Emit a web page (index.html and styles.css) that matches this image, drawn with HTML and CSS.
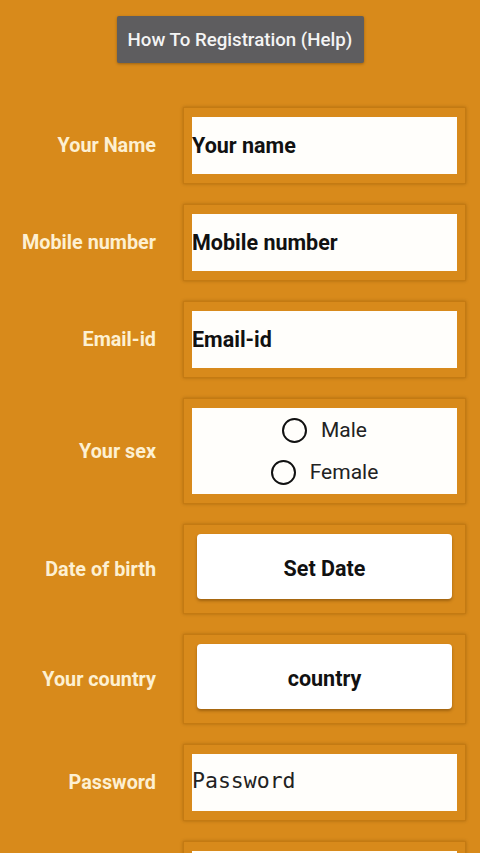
FILE: index.html
```html
<!DOCTYPE html>
<html lang="en">
<head>
    <meta charset="UTF-8">
    <meta name="viewport" content="width=device-width, initial-scale=1.0">
    <title>Registration</title>
    <link rel="stylesheet" href="styles.css">
</head>
<body>
    <div class="top">
        <button class="help">How To Registration (Help)</button>
    </div>

    <div class="form">
        <div class="row">
            <label class="label">Your Name</label>
            <div class="frame">
                <input class="field" type="text" placeholder="Your name">
            </div>
        </div>

        <div class="row">
            <label class="label">Mobile number</label>
            <div class="frame">
                <input class="field" type="text" placeholder="Mobile number">
            </div>
        </div>

        <div class="row">
            <label class="label">Email-id</label>
            <div class="frame">
                <input class="field" type="text" placeholder="Email-id">
            </div>
        </div>

        <div class="row">
            <label class="label">Your sex</label>
            <div class="frame">
                <div class="radios">
                    <div class="radio"><span class="dot"></span>Male</div>
                    <div class="radio"><span class="dot"></span>Female</div>
                </div>
            </div>
        </div>

        <div class="row">
            <label class="label">Date of birth</label>
            <div class="frame">
                <button class="pick">Set Date</button>
            </div>
        </div>

        <div class="row">
            <label class="label">Your country</label>
            <div class="frame">
                <button class="pick">country</button>
            </div>
        </div>

        <div class="row">
            <label class="label">Password</label>
            <div class="frame">
                <input class="field mono" type="password" placeholder="Password">
            </div>
        </div>

        <!-- next row only peeks in at the bottom -->
        <div class="row">
            <label class="label"></label>
            <div class="frame">
                <input class="field mono" type="password">
            </div>
        </div>
    </div>
</body>
</html>
```

FILE: styles.css
```css
body {
    margin: 0;
    background: #d88a1b;
    font-family: Roboto, 'Liberation Sans', sans-serif;
    overflow: hidden;
}
.top {
    display: flex;
    justify-content: center;
    padding-top: 16px;
}
.help {
    width: 247px;
    height: 47px;
    border: none;
    border-radius: 2px;
    background: #5e5d5f;
    color: #f4f4f4;
    font-family: Roboto, sans-serif;
    font-size: 18.7px;
    font-weight: 500;
    box-shadow: 0 1px 3px rgba(0, 0, 0, 0.3);
}
.form {
    padding-top: 44px;
}
.row {
    display: flex;
    align-items: center;
    margin-bottom: 20px;
}
.label {
    width: 156px;
    margin-right: 27px;
    text-align: right;
    color: #fdf0d2;
    font-size: 19.8px;
    font-weight: 700;
}
.frame {
    width: 283px;
    box-sizing: border-box;
    padding: 9px 8px;
    border: 1px solid #c47a12;
    box-shadow: 0 0 3px rgba(120, 70, 0, 0.45);
    background: #d88a1b;
}
.field {
    display: block;
    width: 100%;
    height: 57px;
    box-sizing: border-box;
    margin: 0;
    padding: 0;
    border: none;
    outline: none;
    background: #fffefb;
    font-family: Roboto, sans-serif;
    font-size: 21.5px;
    font-weight: 700;
}
.field::placeholder {
    color: #111;
}
.mono {
    padding-bottom: 4px;
    font-family: 'DejaVu Sans Mono', monospace;
    font-size: 21.5px;
    font-weight: 400;
}
.mono::placeholder {
    color: #222;
}
.radios {
    height: 86px;
    background: #fffefb;
    display: flex;
    flex-direction: column;
    justify-content: center;
    align-items: center;
    gap: 16px;
}
.radio {
    display: flex;
    align-items: center;
    gap: 14px;
    font-size: 21px;
    color: #222;
    line-height: 26px;
}
.dot {
    width: 21px;
    height: 21px;
    border: 2.5px solid #111;
    border-radius: 50%;
}
.pick {
    display: block;
    width: 255px;
    height: 65px;
    margin: 0 5px 5px;
    padding-top: 4px;
    border: none;
    border-radius: 4px;
    background: #fff;
    color: #111;
    font-family: Roboto, sans-serif;
    font-size: 21.5px;
    font-weight: 700;
    box-shadow: 0 2px 3px rgba(90, 50, 0, 0.45);
}
```
